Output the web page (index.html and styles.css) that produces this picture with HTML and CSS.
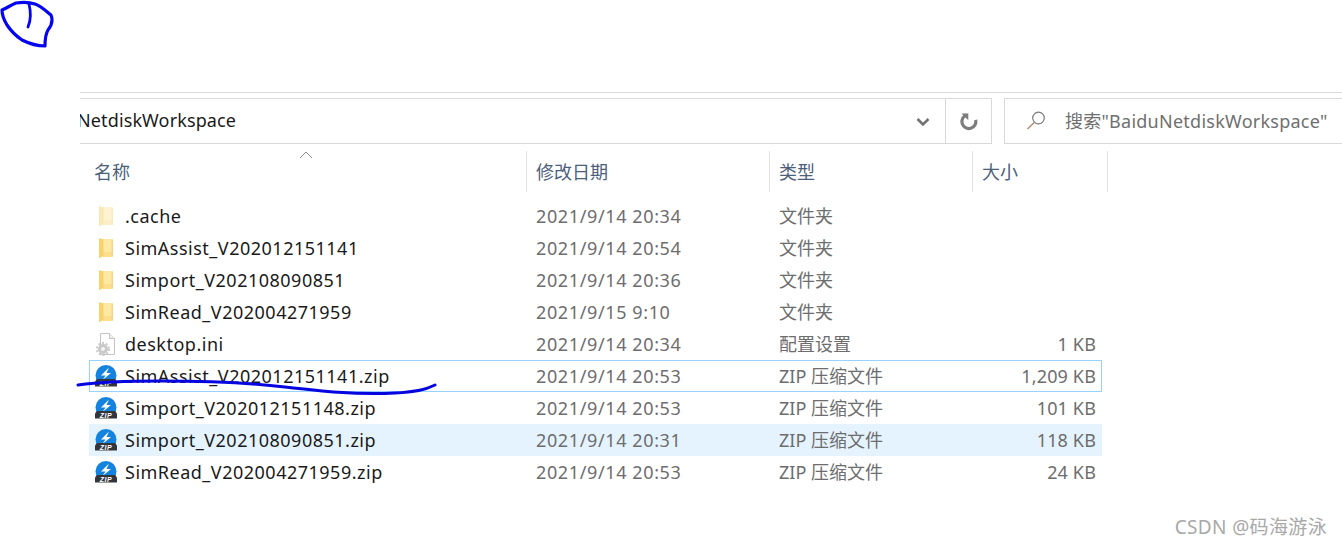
FILE: index.html
```html
<!DOCTYPE html>
<html lang="zh-CN">
<head>
<meta charset="utf-8">
<title>BaiduNetdiskWorkspace</title>
<link rel="stylesheet" href="styles.css">
</head>
<body>
<svg class="defs" width="0" height="0" aria-hidden="true">
  <symbol id="folder" viewBox="0 0 16 22">
    <path d="M5 2h9.500v18H5z" fill="#fee9a4"/>
    <path d="M5 15h9.500v5H5z" fill="#fbdf8e"/>
    <path d="M13.500 2.500h1.500v17h-1.500z" fill="#f6d67c"/>
    <path d="M1 1l4.500 1.500V19L1 21.500z" fill="#f8d36c"/>
  </symbol>
  <symbol id="zip" viewBox="0 0 22 22">
    <circle cx="11" cy="10.500" r="10.500" fill="#1483e0"/>
    <path d="M14 2.500 6 10.500h4.500L7.500 15l8.500-7h-4.500z" fill="#fff"/>
    <path d="M0 16.500 2 14h18l2 2.500V21.500H0z" fill="#33363b"/>
    <text x="11" y="20.800" class="zip-text">ZIP</text>
  </symbol>
  <symbol id="ini" viewBox="0 0 20 24">
    <path d="M4.500 1.500h9l5 5v16h-14z" fill="#fff" stroke="#c4c4c4"/>
    <path d="M13.500 1.500v5h5" fill="#f0f0f0" stroke="#c4c4c4"/>
    <circle cx="7" cy="17" r="5" fill="#c9c9c9"/>
    <circle cx="7" cy="17" r="6" fill="none" stroke="#c9c9c9" stroke-width="2" stroke-dasharray="2 1.800"/>
    <circle cx="7" cy="17" r="2" fill="#f4f4f4"/>
  </symbol>
</svg>

<main class="explorer">
  <div class="rule"></div>
  <div class="toolbar">
    <div class="address">
      <div class="path"><span class="path-text">NetdiskWorkspace</span></div>
      <div class="addr-btn chevron">
        <svg width="14" height="10" viewBox="0 0 14 10"><path d="M1.500 2 7 7.500 12.500 2" fill="none" stroke="#737373" stroke-width="2.600"/></svg>
      </div>
      <div class="addr-btn refresh">
        <svg width="20" height="20" viewBox="0 0 20 20"><path d="M5.300 4.200A7 7 0 1 0 15.600 5.800" transform="rotate(20 10 10)" fill="none" stroke="#7d7d7d" stroke-width="3.200"/><path d="M2.500 1.500h6.800v6.800z" fill="#7d7d7d"/></svg>
      </div>
    </div>
    <div class="search">
      <svg class="search-icon" width="22" height="22" viewBox="0 0 22 22"><circle cx="13.500" cy="8" r="5.800" fill="none" stroke="#7a7a7a" stroke-width="1.200"/><path d="M9.500 12.200 2.500 19" fill="none" stroke="#b58d6f" stroke-width="1.500"/></svg>
      <span class="search-text">搜索"BaiduNetdiskWorkspace"</span>
    </div>
  </div>

  <div class="table">
    <div class="head row-grid">
      <div class="th th-name">名称<svg class="sort" width="14" height="8" viewBox="0 0 14 8"><path d="M1 7 7 1l6 6" fill="none" stroke="#8a8a8a" stroke-width="1"/></svg></div>
      <div class="th">修改日期</div>
      <div class="th">类型</div>
      <div class="th">大小</div>
    </div>
    <div class="rows">
      <div class="row row-grid">
        <div class="name"><svg class="ico folder faded"><use href="#folder"/></svg>.cache</div>
        <div class="cell date">2021/9/14 20:34</div><div class="cell type">文件夹</div><div class="cell size"></div>
      </div>
      <div class="row row-grid">
        <div class="name"><svg class="ico folder"><use href="#folder"/></svg>SimAssist_V202012151141</div>
        <div class="cell date">2021/9/14 20:54</div><div class="cell type">文件夹</div><div class="cell size"></div>
      </div>
      <div class="row row-grid">
        <div class="name"><svg class="ico folder"><use href="#folder"/></svg>Simport_V202108090851</div>
        <div class="cell date">2021/9/14 20:36</div><div class="cell type">文件夹</div><div class="cell size"></div>
      </div>
      <div class="row row-grid">
        <div class="name"><svg class="ico folder"><use href="#folder"/></svg>SimRead_V202004271959</div>
        <div class="cell date">2021/9/15 9:10</div><div class="cell type">文件夹</div><div class="cell size"></div>
      </div>
      <div class="row row-grid">
        <div class="name"><svg class="ico ini"><use href="#ini"/></svg>desktop.ini</div>
        <div class="cell date">2021/9/14 20:34</div><div class="cell type">配置设置</div><div class="cell size">1 KB</div>
      </div>
      <div class="row row-grid focused">
        <div class="name"><svg class="ico zip"><use href="#zip"/></svg>SimAssist_V202012151141.zip</div>
        <div class="cell date">2021/9/14 20:53</div><div class="cell type">ZIP 压缩文件</div><div class="cell size">1,209 KB</div>
      </div>
      <div class="row row-grid">
        <div class="name"><svg class="ico zip"><use href="#zip"/></svg>Simport_V202012151148.zip</div>
        <div class="cell date">2021/9/14 20:53</div><div class="cell type">ZIP 压缩文件</div><div class="cell size">101 KB</div>
      </div>
      <div class="row row-grid selected">
        <div class="name"><svg class="ico zip"><use href="#zip"/></svg>Simport_V202108090851.zip</div>
        <div class="cell date">2021/9/14 20:31</div><div class="cell type">ZIP 压缩文件</div><div class="cell size">118 KB</div>
      </div>
      <div class="row row-grid">
        <div class="name"><svg class="ico zip"><use href="#zip"/></svg>SimRead_V202004271959.zip</div>
        <div class="cell date">2021/9/14 20:53</div><div class="cell type">ZIP 压缩文件</div><div class="cell size">24 KB</div>
      </div>
    </div>
  </div>
</main>

<svg class="ink" width="1342" height="544" viewBox="0 0 1342 544" aria-hidden="true">
  <path d="M2 10C7 8 11 5 16 3C22 2 29 2 35 4C41 6 46 11 51 15C53 20 52 25 48 30C45 35 45 40 45 46C38 46 30 44 22 40C16 36 11 31 7 25C4 20 2 15 2 10Z" fill="none" stroke="#0505f0" stroke-width="3.200" stroke-linejoin="round"/>
  <path d="M29 4C31 12 31 20 28 27" fill="none" stroke="#0505f0" stroke-width="2.800" stroke-linecap="round"/>
  <path d="M78 385C100 382 125 381 160 381C205 381 245 382 285 387C320 391 355 395 395 393C415 392 425 390 435 385" fill="none" stroke="#0505e0" stroke-width="3" stroke-linecap="round"/>
</svg>

<div class="watermark">CSDN @码海游泳</div>
</body>
</html>
```
FILE: styles.css
```css
* { box-sizing: border-box; }
html, body { margin: 0; padding: 0; }
body {
  position: relative;
  width: 1342px;
  height: 544px;
  overflow: hidden;
  background: #fff;
  font-family: "Noto Sans", "Noto Sans CJK SC", sans-serif;
  font-size: 18px;
  color: #6d6d6d;
}
.defs { position: absolute; }
.explorer { padding: 92px 0 0 80px; }
.rule { height: 1px; background: #dcdcdc; margin-bottom: 5px; }
.toolbar { display: flex; height: 46px; gap: 12px; }
.address {
  display: flex;
  width: 912px;
  border: 1px solid #d9d9d9;
  border-left: 0;
}
.path { flex: 1; overflow: hidden; display: flex; align-items: center; padding-bottom: 2px; }
.path-text { margin-left: -3px; color: #1a1a1a; white-space: nowrap; line-height: 1; letter-spacing: .12px; }
.addr-btn { display: flex; align-items: center; justify-content: center; }
.chevron { width: 38px; padding: 2px 8px 0 0; border-right: 1px solid #d9d9d9; }
.refresh { width: 45px; padding: 1px 0 0 1px; }
.search {
  flex: 1;
  display: flex;
  align-items: center;
  border: 1px solid #d9d9d9;
  border-right: 0;
  padding: 0 0 2px 20px;
  color: #6f6f6f;
}
.search-icon { flex: none; margin: 2px 18px 0 0; }
.search-text { white-space: nowrap; letter-spacing: .25px; }

.table { width: 1028px; padding-top: 7px; }
.row-grid { display: grid; grid-template-columns: 447px 243px 203px 135px; }
.head { height: 41px; }
.th {
  position: relative;
  display: flex;
  align-items: center;
  padding: 0 0 2px 9px;
  border-right: 1px solid #e3e3e3;
  color: #4c607a;
}
.th-name { padding-left: 14px; }
.sort { position: absolute; left: 219px; top: 0; }
.rows { padding-top: 8px; }
.row { height: 32px; align-items: center; position: relative; }
.row .name {
  display: flex;
  align-items: center;
  padding-left: 15px;
  color: #1a1a1a;
  white-space: nowrap;
  letter-spacing: .5px;
}
.cell { padding-left: 9px; white-space: nowrap; }
.date { letter-spacing: .62px; }
.type { padding-bottom: 2px; }
.size { text-align: right; padding: 0 12px 0 0; letter-spacing: .15px; }
.ico { flex: none; width: 22px; height: 22px; margin-right: 8px; }
.folder { width: 16px; margin-left: 3px; margin-right: 11px; }
.faded { opacity: .5; }
.ini { width: 20px; height: 24px; margin: 0 9px 0 1px; }
.zip-text {
  font-family: "Liberation Sans", sans-serif;
  font-size: 7px;
  font-weight: 700;
  font-style: italic;
  fill: #fff;
  text-anchor: middle;
}
.focused::before, .selected::before {
  content: "";
  position: absolute;
  z-index: -1;
  inset: 0 6px 0 9px;
}
.focused::before { border: 1px solid #99d1ff; }
.selected::before { background: #e5f3fe; }

.ink { position: absolute; left: 0; top: 0; pointer-events: none; }
.watermark {
  position: absolute;
  right: 15px;
  top: 512px;
  font-size: 19px;
  letter-spacing: .35px;
  color: #a8a8a8;
  white-space: nowrap;
}
```
